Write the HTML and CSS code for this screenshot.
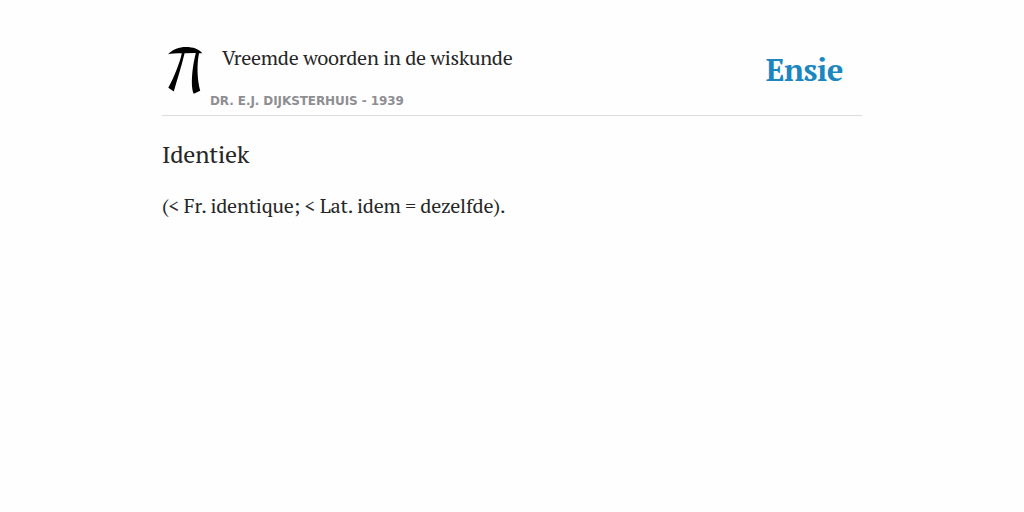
FILE: index.html
```html
<!DOCTYPE html>
<html lang="nl">
<head>
    <meta charset="UTF-8">
    <meta name="viewport" content="width=device-width, initial-scale=1.0">
    <title>Identiek - Ensie</title>
    <link rel="stylesheet" href="styles.css">
</head>
<body>
    <div class="container">
        <header class="header">
            <svg class="book-image" viewBox="0 0 48 60" width="48" height="60" aria-hidden="true">
                <path d="M6 14.2C11 9 17 7 24 7C31 7 37 9 40.3 13.2L37 13.2C34.8 24 35 39 38.2 50.8L31.8 53.8C28.7 48 29.5 30 33.8 13L22.6 13.2C19.6 26 15 40 11.8 51.5L6.3 47.8C12 37 17.5 24 19.8 13.2C14 13.2 9 13.2 6 14.2Z"/>
            </svg>
            <div class="book">
                <div class="book-title">Vreemde woorden in de wiskunde</div>
                <div class="book-author">Dr. E.J. Dijksterhuis - 1939</div>
            </div>
            <div class="logo">Ensie</div>
        </header>
        <main>
            <h1>Identiek</h1>
            <p class="definition">(&lt; Fr. identique; &lt; Lat. idem = dezelfde).</p>
        </main>
    </div>
</body>
</html>
```
FILE: styles.css
```css
body {
    margin: 0;
    background: #fefefe;
    color: #262626;
    font-family: "PT Serif", "DejaVu Serif Condensed", "Liberation Serif", serif;
}
.container {
    width: 700px;
    margin: 0 auto;
    padding-top: 40px;
}
.header {
    display: flex;
    height: 75px;
    border-bottom: 1px solid #dcdcdc;
}
.book {
    flex: 1;
}
.book-title {
    padding: 4px 0 0 12px;
    font-size: 20px;
    letter-spacing: -0.25px;
    line-height: 28px;
    white-space: nowrap;
}
.book-author {
    margin-top: 20px;
    color: #8e8e92;
    font-family: "DejaVu Sans", sans-serif;
    font-size: 12px;
    font-weight: bold;
    letter-spacing: -0.09px;
    line-height: 18px;
    text-transform: uppercase;
}
.logo {
    padding: 10px 19px 0 0;
    color: #1c86c0;
    font-size: 31px;
    font-weight: bold;
    letter-spacing: -0.5px;
    line-height: 40px;
}
h1 {
    margin: 22px 0 0;
    font-size: 24px;
    font-weight: normal;
    letter-spacing: -0.2px;
    line-height: 33px;
}
.definition {
    margin: 20px 0 0;
    font-size: 20px;
    letter-spacing: -0.2px;
    line-height: 30px;
}
```
